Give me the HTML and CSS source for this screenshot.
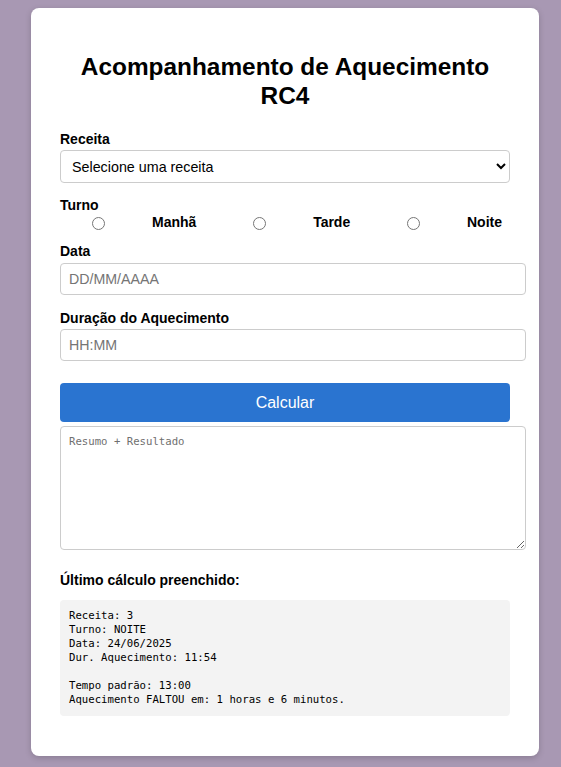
FILE: index.html
```
<!DOCTYPE html>
<html lang="pt-BR">
<head>
<meta charset="utf-8">
<title>Acompanhamento de Aquecimento RC4</title>
<link rel="stylesheet" href="styles.css">
</head>
<body>
<div class="card">
  <h1 class="title">Acompanhamento de Aquecimento RC4</h1>

  <label class="field-label lbl-receita" for="receita">Receita</label>
  <select id="receita" class="select">
    <option>Selecione uma receita</option>
  </select>

  <div class="field-label lbl-turno">Turno</div>
  <div class="turno-options">
    <label class="opt"><span class="radio-box"><input type="radio" name="turno"></span><span class="opt-text">Manhã</span></label>
    <label class="opt"><span class="radio-box"><input type="radio" name="turno"></span><span class="opt-text">Tarde</span></label>
    <label class="opt"><span class="radio-box"><input type="radio" name="turno"></span><span class="opt-text">Noite</span></label>
  </div>

  <label class="field-label lbl-data" for="data">Data</label>
  <input id="data" class="text-input" type="text" placeholder="DD/MM/AAAA">

  <label class="field-label lbl-dur" for="dur">Duração do Aquecimento</label>
  <input id="dur" class="text-input" type="text" placeholder="HH:MM">

  <button class="btn" type="button">Calcular</button>

  <textarea class="result" placeholder="Resumo + Resultado"></textarea>

  <h3 class="last-title">Último cálculo preenchido:</h3>
  <pre class="last-box">Receita: 3
Turno: NOITE
Data: 24/06/2025
Dur. Aquecimento: 11:54

Tempo padrão: 13:00
Aquecimento FALTOU em: 1 horas e 6 minutos.</pre>
</div>
</body>
</html>
```

FILE: styles.css
```
html, body {
  margin: 0;
  padding: 0;
}
body {
  background: #a898b3;
  font-family: "Liberation Sans", Arial, sans-serif;
  color: #111;
  padding-top: 8px;
  min-height: 767px;
  box-sizing: border-box;
}
.card {
  margin: 0 0 0 31px;
  padding: 29px;
  background: #fff;
  border-radius: 8px;
  box-shadow: 0 2px 6px rgba(0, 0, 0, 0.18);
  height: 748px;
  box-sizing: border-box;
  width: 508px;
}
.title {
  margin: 15px 0 0 0;
  font-size: 24.4px;
  line-height: 29px;
  font-weight: bold;
  text-align: center;
  color: #000;
}
.field-label {
  display: block;
  font-size: 14px;
  line-height: 16px;
  font-weight: bold;
  color: #000;
}
.lbl-receita { margin-top: 21px; }
.select {
  display: block;
  margin-top: 3px;
  width: 450px;
  height: 33px;
  box-sizing: border-box;
  padding: 0 7px;
  font-family: "Liberation Sans", Arial, sans-serif;
  font-size: 14.3px;
  color: #000;
  background: #fff;
  border: 1px solid #ccc;
  border-radius: 4px;
}
.lbl-turno { margin-top: 14px; }
.turno-options {
  display: flex;
  justify-content: space-between;
  align-items: center;
  width: 450px;
  margin-top: 1px;
  height: 16px;
}
.opt {
  display: flex;
  align-items: center;
  margin-right: 8px;
  font-size: 14px;
  line-height: 16px;
  font-weight: bold;
  color: #000;
}
.radio-box {
  width: 76px;
  display: flex;
  justify-content: center;
  padding-top: 3px;
}
.radio-box input {
  margin: 0;
  width: 13px;
  height: 13px;
}
.opt-text { margin-left: 16px; }
.lbl-data { margin-top: 13px; }
.lbl-dur { margin-top: 15px; }
.text-input {
  display: block;
  width: 466px;
  height: 32px;
  box-sizing: border-box;
  margin-top: 4px;
  padding: 0 8px;
  font-family: "Liberation Sans", Arial, sans-serif;
  font-size: 14.2px;
  border: 1px solid #ccc;
  border-radius: 4px;
  background: #fff;
  outline: none;
}
.lbl-dur + .text-input { margin-top: 3px; }
.text-input::placeholder { color: #757575; }
.btn {
  display: block;
  margin-top: 22px;
  width: 450px;
  height: 39px;
  border: none;
  border-radius: 4px;
  background: #2a74d0;
  color: #fff;
  font-family: "Liberation Sans", Arial, sans-serif;
  font-size: 16px;
  cursor: pointer;
}
.result {
  display: block;
  margin-top: 4px;
  width: 466px;
  height: 124px;
  box-sizing: border-box;
  padding: 8px;
  border: 1px solid #ccc;
  border-radius: 4px;
  font-family: "DejaVu Sans Mono", monospace;
  font-size: 10.67px;
  background: #fff;
}
.result::placeholder { color: #6f6f6f; }
.last-title {
  margin: 22px 0 0 0;
  font-size: 14px;
  line-height: 16px;
  font-weight: bold;
  color: #000;
}
.last-box {
  margin: 12px 0 0 0;
  width: 450px;
  box-sizing: border-box;
  padding: 9px;
  background: #f3f3f3;
  border-radius: 4px;
  font-family: "DejaVu Sans Mono", monospace;
  font-size: 10.67px;
  line-height: 14px;
  color: #000;
}
```
